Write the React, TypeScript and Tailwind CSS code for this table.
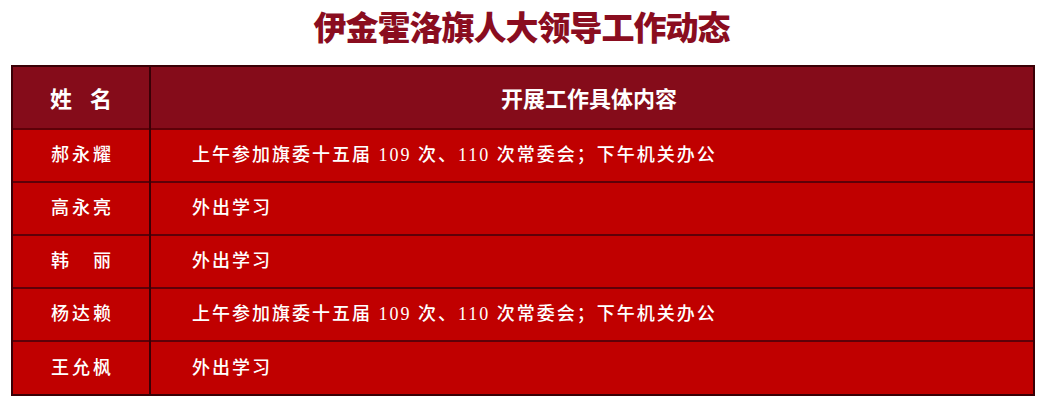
const rows = [
  { name: '郝永耀', text: '上午参加旗委十五届 109 次、110 次常委会；下午机关办公' },
  { name: '高永亮', text: '外出学习' },
  { name: '韩\u3000丽', text: '外出学习' },
  { name: '杨达赖', text: '上午参加旗委十五届 109 次、110 次常委会；下午机关办公' },
  { name: '王允枫', text: '外出学习' },
];

const bodyFont = { fontFamily: '"Liberation Serif", "Noto Sans CJK SC", serif' };

export default function App() {
  return (
    <div className="w-[1043px] h-[403px] bg-white overflow-hidden">
      <h1
        className="h-[52px] pt-[4px] text-center text-[33px] font-black leading-[44px] text-[#8a0d1f] tracking-[-1px]"
        style={{ fontFamily: '"Noto Sans CJK SC", sans-serif' }}
      >
        伊金霍洛旗人大领导工作动态
      </h1>
      <div className="ml-[11px] mt-[13px] w-[1024px] border-2 border-[#3a0006]">
        <table className="w-full border-collapse">
          <thead>
            <tr className="h-[62px] bg-[#850c1a] text-white">
              <th
                className="w-[137px] border-r-2 border-[#3a0006] text-[22px] font-bold"
                style={{ fontFamily: '"Noto Sans CJK SC", sans-serif' }}
              >
                姓<span className="inline-block w-[18px]" />名
              </th>
              <th
                className="text-[22px] font-bold pr-[6px]"
                style={{ fontFamily: '"Noto Sans CJK SC", sans-serif' }}
              >
                开展工作具体内容
              </th>
            </tr>
          </thead>
          <tbody>
            {rows.map((r, i) => (
              <tr key={i} className="h-[53px] bg-[#c00000] text-white border-t-2 border-[#5e0008]">
                <td
                  className="border-r-2 border-[#3a0006] text-center text-[18px] font-medium tracking-[3px] pl-[3px]"
                  style={bodyFont}
                >
                  {r.name}
                </td>
                <td className="pl-[41px] text-[18px] font-medium tracking-[2px]" style={bodyFont}>
                  {r.text}
                </td>
              </tr>
            ))}
          </tbody>
        </table>
      </div>
    </div>
  );
}
